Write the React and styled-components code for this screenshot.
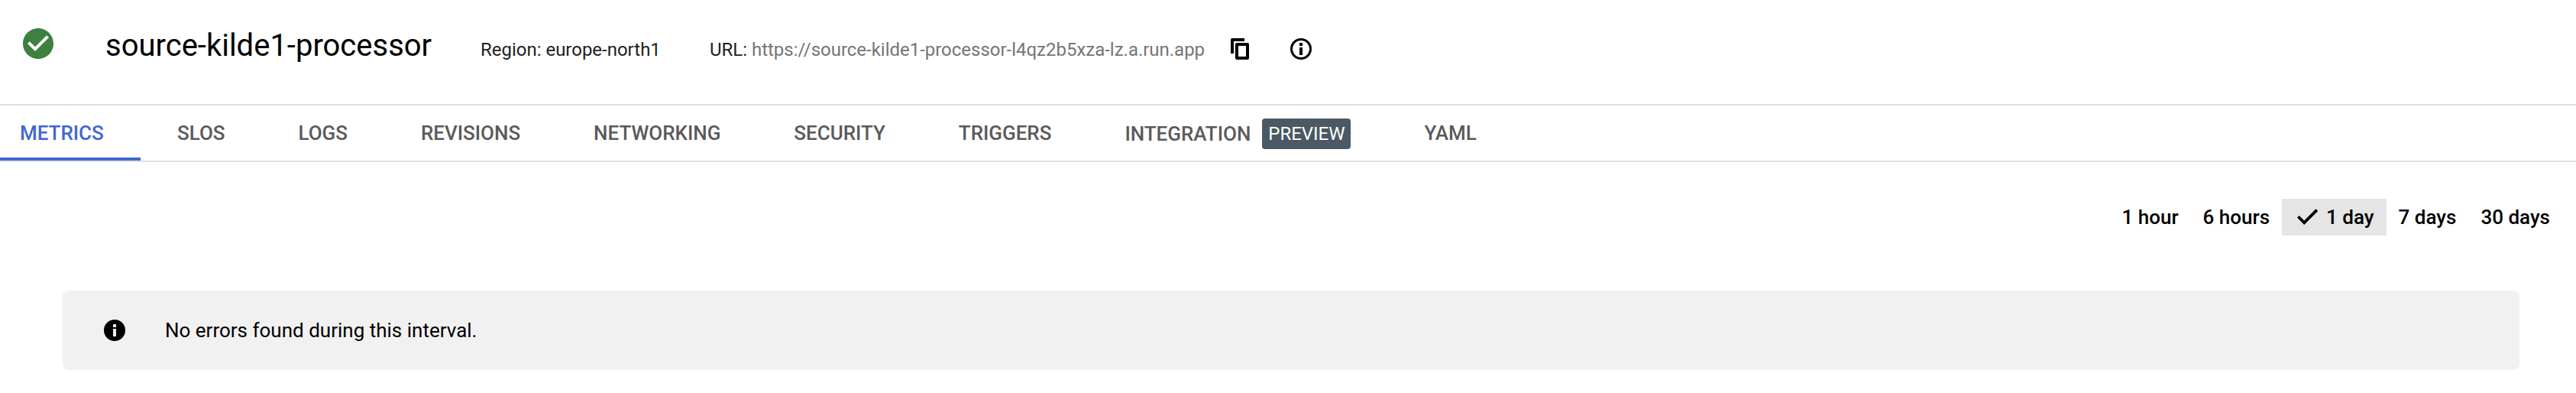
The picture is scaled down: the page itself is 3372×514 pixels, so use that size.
import React from "react";
import styled, { createGlobalStyle, css } from "styled-components";

const GlobalStyle = createGlobalStyle`
  *, *::before, *::after { box-sizing: border-box; }
  body {
    margin: 0;
    background: #fff;
    color: #000;
    font-family: Roboto, "Liberation Sans", sans-serif;
  }
  button { font: inherit; border: 0; background: none; margin: 0; padding: 0; }
`;

const Page = styled.main`
  height: 514px;
  overflow: hidden;
  white-space: nowrap;
`;

const Header = styled.header`
  height: 136px;
  padding-left: 26px;
  display: flex;
  align-items: flex-start;
`;

const Icon = styled.svg`
  display: block;
  flex: none;
  width: ${(p) => p.$size}px;
  height: ${(p) => p.$size}px;
  fill: ${(p) => p.$color || "#000"};
`;

const Status = styled.div`
  margin-top: 33px;
  width: 112px;
`;

const Title = styled.h1`
  margin: 36px 0 0;
  width: 491px;
  font-size: 40px;
  line-height: 48px;
  font-weight: 400;
`;

const Meta = styled.div`
  margin-top: 49px;
  width: ${(p) => p.$width}px;
  font-size: 24px;
  line-height: 32px;
  letter-spacing: -0.015px;
  color: #212121;
`;

const Url = styled.a`
  color: #757575;
`;

const IconButton = styled.button`
  margin: 46px 44px 0 0;
`;

const TabBar = styled.nav`
  height: 76px;
  border-top: 2px solid #e0e0e0;
  border-bottom: 2px solid #e0e0e0;
  display: flex;
`;

const Tab = styled.button`
  height: 72px;
  padding: ${(p) => (p.$badged ? 6 : 4)}px 48px 0;
  display: flex;
  align-items: center;
  font-size: 26px;
  font-weight: 500;
  line-height: 32px;
  letter-spacing: -0.03px;
  color: #5a5a5a;
  border-bottom: 4px solid transparent;
  ${(p) =>
    p.$active &&
    css`
      width: 184px;
      padding: 4px 0 0 26px;
      color: #3f66d4;
      border-bottom-color: #3f66d4;
    `}
`;

const Badge = styled.span`
  height: 40px;
  margin-left: 15px;
  padding: 0 8px;
  border-radius: 4px;
  background: #4a5963;
  color: #fff;
  font-size: 24px;
  font-weight: 400;
  line-height: 40px;
`;

const RangeBar = styled.div`
  margin-top: 48px;
  padding-right: 18px;
  display: flex;
  justify-content: flex-end;
`;

const Range = styled.button`
  height: 48px;
  padding: 0 16px;
  display: flex;
  align-items: center;
  gap: 6px;
  font-size: 26px;
  font-weight: 500;
  line-height: 48px;
  background: ${(p) => (p.$selected ? "#e5e5e5" : "transparent")};
`;

const Banner = styled.section`
  margin: 72px 74px 0 82px;
  height: 104px;
  padding-left: 50px;
  display: flex;
  align-items: center;
  gap: 48px;
  border-radius: 8px;
  background: #f1f1f1;
  font-size: 26px;
  line-height: 32px;
`;

const tabs = [
  "Metrics", "SLOs", "Logs", "Revisions", "Networking",
  "Security", "Triggers", "Integration", "YAML",
];
const ranges = ["1 hour", "6 hours", "1 day", "7 days", "30 days"];

export default function App() {
  return (
    <>
      <GlobalStyle />
      <Page>
        <Header>
          <Status>
            <Icon viewBox="0 0 24 24" $size={48} $color="#3d8040">
              <path d="M12 2C6.48 2 2 6.48 2 12s4.48 10 10 10 10-4.48 10-10S17.52 2 12 2zm-2 15l-5-5 1.41-1.41L10 14.17l7.59-7.59L19 8l-9 9z" />
            </Icon>
          </Status>
          <Title>source-kilde1-processor</Title>
          <Meta $width={300}>Region: europe-north1</Meta>
          <Meta $width={676}>
            URL: <Url>https://source-kilde1-processor-l4qz2b5xza-lz.a.run.app</Url>
          </Meta>
          <IconButton aria-label="Copy URL">
            <Icon viewBox="0 0 18 18" $size={36}>
              <path d="M12 2H4a1 1 0 0 0-1 1v9h2V4h7V2z" />
              <path fillRule="evenodd" d="M7 5h7a1 1 0 0 1 1 1v9a1 1 0 0 1-1 1H7a1 1 0 0 1-1-1V6a1 1 0 0 1 1-1zm1 2v7h5V7H8z" />
            </Icon>
          </IconButton>
          <IconButton aria-label="URL details">
            <Icon viewBox="0 0 18 18" $size={36}>
              <path fillRule="evenodd" d="M9 2a7 7 0 1 0 0 14A7 7 0 0 0 9 2zm0 1.5a5.5 5.5 0 1 1 0 11 5.5 5.5 0 0 1 0-11zM8 5h2v2H8V5zm0 3h2v5H8V8z" />
            </Icon>
          </IconButton>
        </Header>
        <TabBar>
          {tabs.map((name) => (
            <Tab
              key={name}
              $active={name === "Metrics"}
              $badged={name === "Integration"}
            >
              {name.toUpperCase()}
              {name === "Integration" && <Badge>PREVIEW</Badge>}
            </Tab>
          ))}
        </TabBar>
        <RangeBar>
          {ranges.map((name) => (
            <Range key={name} $selected={name === "1 day"}>
              {name === "1 day" && (
                <Icon viewBox="0 0 18 18" $size={36}>
                  <path d="M6.6 11.2L3.35 7.95 2 9.3 6.6 14 15.6 5 14.25 3.6z" />
                </Icon>
              )}
              {name}
            </Range>
          ))}
        </RangeBar>
        <Banner>
          <Icon viewBox="0 0 18 18" $size={36}>
            <path fillRule="evenodd" d="M9 2a7 7 0 1 0 0 14A7 7 0 0 0 9 2zM8 5h2v2H8V5zm0 3h2v5H8V8z" />
          </Icon>
          No errors found during this interval.
        </Banner>
      </Page>
    </>
  );
}
